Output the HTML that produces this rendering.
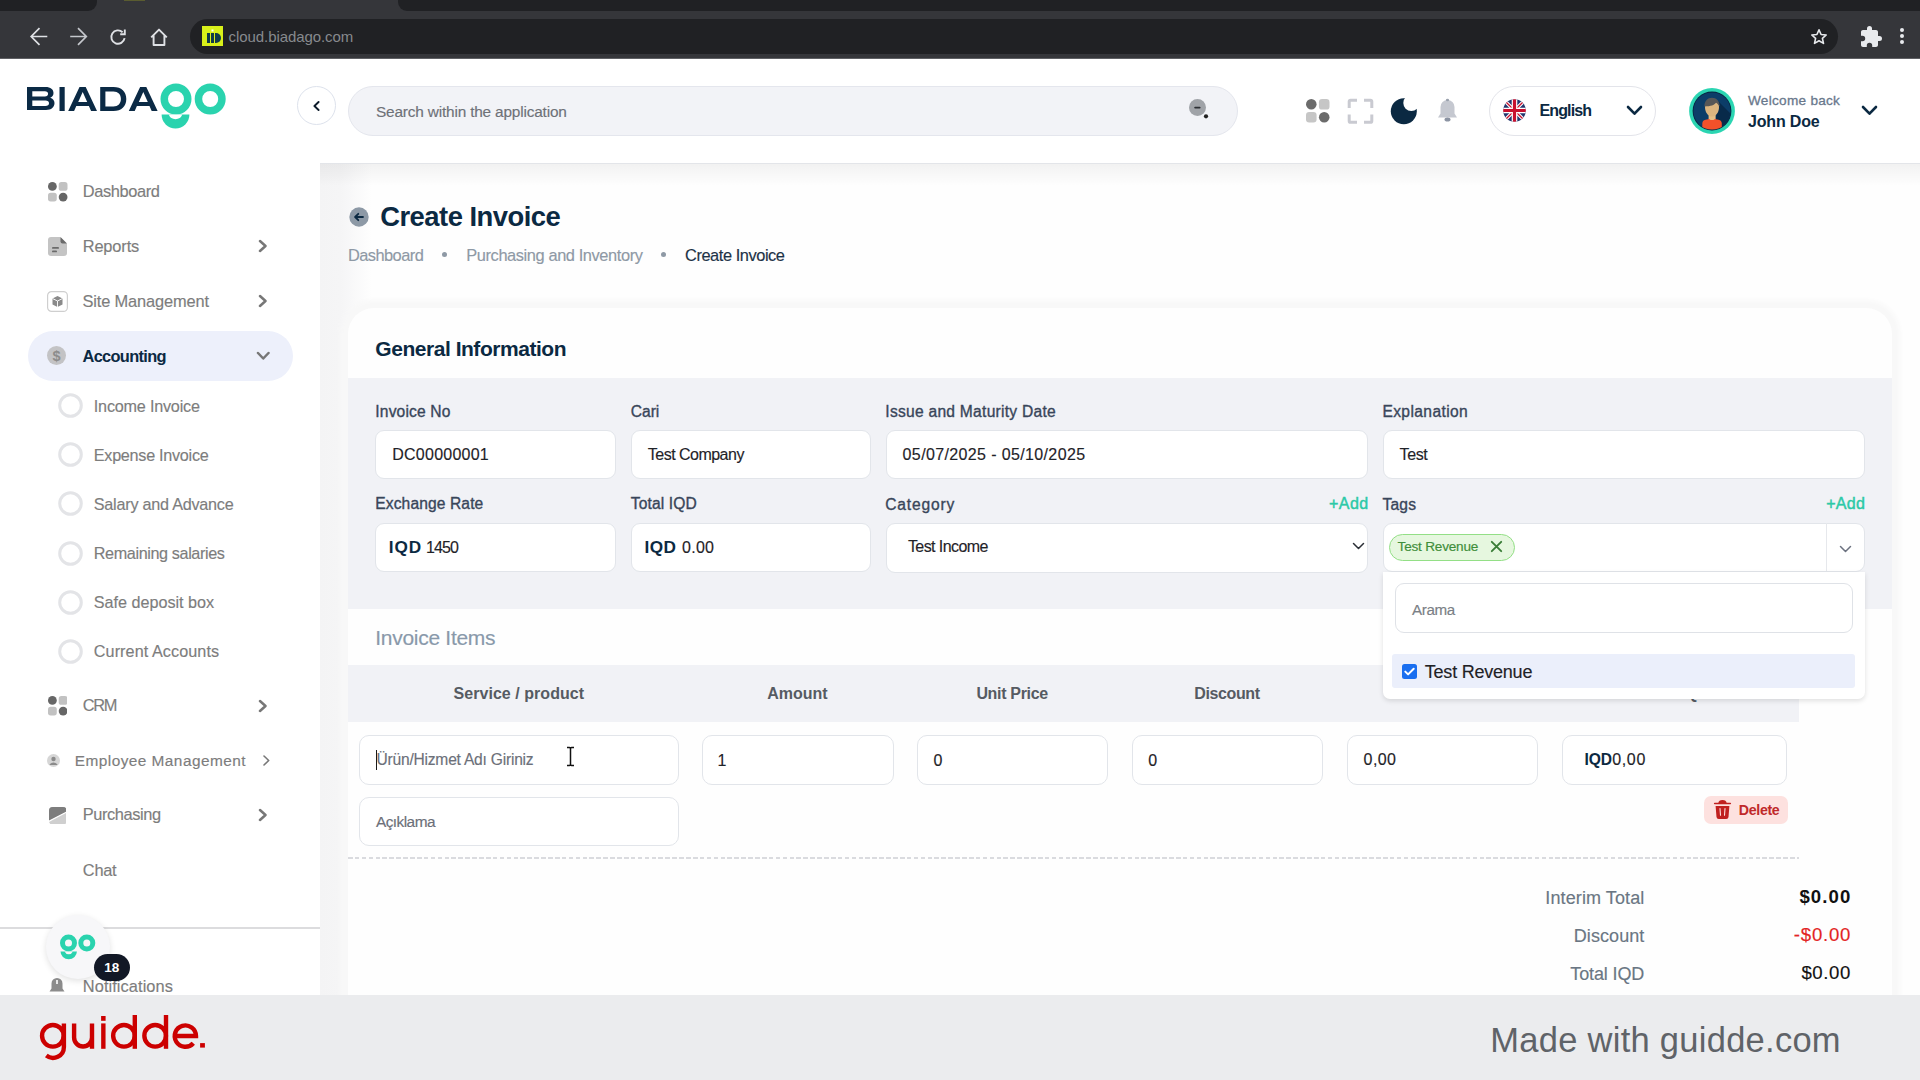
<!DOCTYPE html>
<html><head><meta charset="utf-8"><style>
html,body{margin:0;padding:0;width:1920px;height:1080px;overflow:hidden;background:#fff}
body{position:relative;font-family:'Liberation Sans', sans-serif}
.t{position:absolute;line-height:1;white-space:nowrap}
.m{-webkit-text-stroke-width:0.15px}
.r{position:absolute;box-sizing:border-box}
</style></head><body>
<div class="r" style="left:0px;top:0px;width:1920px;height:58px;background:#35363a"></div>
<div class="r" style="left:0px;top:0px;width:97px;height:11px;background:#202124;border-bottom-right-radius:9px"></div>
<div class="r" style="left:398px;top:0px;width:1522px;height:11px;background:#202124;border-bottom-left-radius:9px"></div>
<div class="r" style="left:124px;top:0px;width:21px;height:1px;background:#5a5c30"></div>
<div class="r" style="left:0px;top:58px;width:1920px;height:1px;background:#5f6064"></div>
<div class="r" style="left:190px;top:19px;width:1648px;height:35px;background:#202124;border-radius:18px"></div>
<svg class="r" style="left:28px;top:26px;" width="22" height="22" viewBox="0 0 22 22"><path d="M19.3 10.5H4M11.5 2.2L3.2 10.5l8.3 8.3" fill="none" stroke="#dfe1e5" stroke-width="1.7"/></svg>
<svg class="r" style="left:68px;top:26px;" width="22" height="22" viewBox="0 0 22 22"><path d="M2.2 10.5H17.5M10 2.2l8.3 8.3-8.3 8.3" fill="none" stroke="#c4c7cc" stroke-width="1.7"/></svg>
<svg class="r" style="left:107px;top:26px;" width="22" height="22" viewBox="0 0 22 22"><path d="M17.6 12.2A6.7 6.7 0 1 1 15.6 6.2" fill="none" stroke="#dfe1e5" stroke-width="1.9"/><path d="M17.8 3.6v4.6h-4.6" fill="none" stroke="#dfe1e5" stroke-width="1.9"/></svg>
<svg class="r" style="left:148px;top:26px;" width="22" height="22" viewBox="0 0 22 22"><path d="M3.2 11.4L11 3.6l7.8 7.8M5.6 9.4v9.6h10.8V9.4" fill="none" stroke="#dfe1e5" stroke-width="1.9" stroke-linejoin="round"/></svg>
<div class="r" style="left:202px;top:26px;width:21px;height:20px;background:#d8f01a"></div>
<svg class="r" style="left:202px;top:26px;" width="21" height="20" viewBox="0 0 21 20"><rect x="5" y="7" width="3" height="10" fill="#0e3a4a"/><rect x="9" y="7" width="3" height="10" fill="#0e3a4a"/><path d="M13 7h1a5 5 0 0 1 0 10h-1z" fill="#0e3a4a"/><rect x="9.5" y="3.5" width="2" height="2" fill="#fff"/></svg>
<div class="t" style="left:228.60px;top:28.85px;font-size:15px;color:#878a8e;letter-spacing:-0.077px;-webkit-text-stroke-width:0;">cloud.biadago.com</div>
<svg class="r" style="left:1810px;top:28px;" width="18" height="18" viewBox="0 0 18 18"><path d="M9 1.8l2.1 4.7 5.1.5-3.8 3.4 1.1 5-4.5-2.6-4.5 2.6 1.1-5L1.8 7l5.1-.5z" fill="none" stroke="#e8eaed" stroke-width="1.6" stroke-linejoin="round"/></svg>
<svg class="r" style="left:1859px;top:25px;" width="24" height="24" viewBox="0 0 24 24"><path d="M20.5 11H19V7c0-1.1-.9-2-2-2h-4V3.5a2.5 2.5 0 0 0-5 0V5H4c-1.1 0-2 .9-2 2v3.8h1.5a2.7 2.7 0 0 1 0 5.4H2V20c0 1.1.9 2 2 2h3.8v-1.5a2.7 2.7 0 0 1 5.4 0V22H17c1.1 0 2-.9 2-2v-4h1.5a2.5 2.5 0 0 0 0-5z" fill="#e8eaed"/></svg>
<div class="r" style="left:1900px;top:28px;width:4px;height:4px;background:#e8eaed;border-radius:50%"></div>
<div class="r" style="left:1900px;top:34px;width:4px;height:4px;background:#e8eaed;border-radius:50%"></div>
<div class="r" style="left:1900px;top:40px;width:4px;height:4px;background:#e8eaed;border-radius:50%"></div>
<div class="r" style="left:0px;top:59px;width:320px;height:936px;background:#ffffff"></div>
<div class="r" style="left:320px;top:59px;width:1600px;height:936px;background:#fefefe"></div>
<div class="r" style="left:320px;top:163px;width:52px;height:832px;background:linear-gradient(90deg,#f4f4f5 0,#f5f5f6 40%,rgba(254,254,254,0) 100%)"></div>
<div class="r" style="left:320px;top:163px;width:1600px;height:23px;background:linear-gradient(180deg,rgba(0,0,0,0.05),rgba(0,0,0,0))"></div>
<div class="r" style="left:320px;top:59px;width:1600px;height:105px;background:#ffffff;border-bottom:1px solid #e3e5e9"></div>
<svg class="r" style="left:20px;top:80px;" width="220" height="55" viewBox="0 0 220 55">
<g fill="#0b2a45">
<path d="M7 7h18.5c5.2 0 8 2.4 8 6 0 2.4-1.3 4-3.3 4.8 2.6.7 4.3 2.6 4.3 5.3 0 4.2-3.1 7-8.5 7H7z M12.3 11.3v5.1h12.6c2 0 3.2-.9 3.2-2.55 0-1.65-1.2-2.55-3.2-2.55z M12.3 20.4v5.6h13.2c2.2 0 3.5-1 3.5-2.8s-1.3-2.8-3.5-2.8z"/>
<rect x="39.5" y="7" width="5.2" height="24"/>
<path d="M59.5 7h6.2l11.3 24h-5.9l-2.2-4.9H56.3L54.1 31h-5.9z M58.2 22h9l-4.5-10z"/>
<path d="M80.2 7h13.3c7.9 0 12.8 4.6 12.8 12s-4.9 12-12.8 12H80.2z M85.4 11.6v14.8h8c4.7 0 7.5-2.9 7.5-7.4s-2.8-7.4-7.5-7.4z"/>
<path d="M120.1 7h6.2l11.3 24h-5.9l-2.2-4.9h-12.6L114.7 31h-5.9z M118.8 22h9l-4.5-10z"/>
</g>
<g fill="#2ad3ae" fill-rule="evenodd">
<path d="M140.5 19a15.5 15.5 0 1 0 31 0a15.5 15.5 0 1 0 -31 0z M148 19a8 8 0 1 0 16 0a8 8 0 1 0 -16 0z"/>
<path d="M174.7 19a15.5 15.5 0 1 0 31 0a15.5 15.5 0 1 0 -31 0z M182.2 19a8 8 0 1 0 16 0a8 8 0 1 0 -16 0z"/>
<path d="M141.6 34.6h27.8a13.9 13.9 0 0 1 -27.8 0z"/>
</g>
<path d="M148.65 34.6A7.4 7.4 0 0 0 162.35 34.6z" fill="#fff"/>
</svg>
<svg class="r" style="left:48px;top:182px;" width="19.5" height="19.5" viewBox="0 0 19.5 19.5"><circle cx="4.3875" cy="4.3875" r="4.3875" fill="#666"/><rect x="10.725" y="0" width="8.775" height="8.775" rx="2.6325" fill="#c2c2c2"/><rect x="0" y="10.725" width="8.775" height="8.775" rx="2.6325" fill="#c2c2c2"/><circle cx="15.1125" cy="15.1125" r="4.3875" fill="#666"/></svg>
<div class="t m" style="left:82.70px;top:183.36px;font-size:16.4px;color:#7d7d7d;letter-spacing:-0.367px;">Dashboard</div>
<svg class="r" style="left:48px;top:237px;" width="19" height="19" viewBox="0 0 19 19"><path d="M3 0h9l7 7v9a3 3 0 0 1 -3 3H3a3 3 0 0 1 -3 -3V3a3 3 0 0 1 3 -3z" fill="#c4c4c4"/><path d="M12.5 0L19 6.5h-4.5a2 2 0 0 1 -2 -2z" fill="#6a6a6a"/><rect x="4" y="10" width="7" height="1.8" rx=".9" fill="#6a6a6a"/><rect x="4" y="13.5" width="5" height="1.8" rx=".9" fill="#6a6a6a"/></svg>
<div class="t m" style="left:82.70px;top:238.36px;font-size:16.4px;color:#7d7d7d;letter-spacing:-0.140px;">Reports</div>
<svg class="r" style="left:257.6px;top:239.0px;" width="9.8" height="14" viewBox="0 0 9.8 14"><path d="M2 2L7.5 7.0L2 12" fill="none" stroke="#777" stroke-width="2.5" stroke-linecap="round" stroke-linejoin="round"/></svg>
<svg class="r" style="left:47px;top:291px;" width="21" height="21" viewBox="0 0 21 21"><rect x=".6" y=".6" width="19.8" height="19.8" rx="4" fill="none" stroke="#cfcfcf" stroke-width="1.2"/><path d="M10.5 5l5 2.5v6L10.5 16 5.5 13.5v-6z" fill="#8a8a8a"/><path d="M5.5 7.5l5 2.5 5-2.5M10.5 10v6" fill="none" stroke="#fff" stroke-width=".9"/></svg>
<div class="t m" style="left:82.50px;top:292.86px;font-size:16.4px;color:#7d7d7d;letter-spacing:-0.145px;">Site Management</div>
<svg class="r" style="left:257.6px;top:294.0px;" width="9.8" height="14" viewBox="0 0 9.8 14"><path d="M2 2L7.5 7.0L2 12" fill="none" stroke="#777" stroke-width="2.5" stroke-linecap="round" stroke-linejoin="round"/></svg>
<div class="r" style="left:28px;top:331px;width:265px;height:50px;background:#edf0fb;border-radius:25px"></div>
<svg class="r" style="left:47px;top:346px;" width="19" height="19" viewBox="0 0 19 19"><circle cx="9.5" cy="9.5" r="9.5" fill="#c3c3c5"/><text x="9.5" y="14.5" text-anchor="middle" font-family="Liberation Sans" font-weight="700" font-size="14.5" fill="#8c8c8c">$</text></svg>
<div class="t" style="left:82.50px;top:347.56px;font-size:16.4px;color:#0b2942;font-weight:700;letter-spacing:-0.678px;">Accounting</div>
<svg class="r" style="left:255.55px;top:350.90000000000003px;" width="14.5" height="9.8" viewBox="0 0 14.5 9.8"><path d="M2 2L7.25 7.5L12.5 2" fill="none" stroke="#777" stroke-width="2.5" stroke-linecap="round" stroke-linejoin="round"/></svg>
<svg class="r" style="left:58px;top:392.8px;" width="25" height="25" viewBox="0 0 25 25"><circle cx="12.5" cy="12.5" r="10.8" fill="none" stroke="#e3e4e7" stroke-width="3"/></svg>
<div class="t m" style="left:93.80px;top:397.53px;font-size:16.2px;color:#7d7d7d;letter-spacing:-0.211px;">Income Invoice</div>
<svg class="r" style="left:58px;top:442.1px;" width="25" height="25" viewBox="0 0 25 25"><circle cx="12.5" cy="12.5" r="10.8" fill="none" stroke="#e3e4e7" stroke-width="3"/></svg>
<div class="t m" style="left:93.80px;top:446.53px;font-size:16.2px;color:#7d7d7d;letter-spacing:-0.276px;">Expense Invoice</div>
<svg class="r" style="left:58px;top:491.4px;" width="25" height="25" viewBox="0 0 25 25"><circle cx="12.5" cy="12.5" r="10.8" fill="none" stroke="#e3e4e7" stroke-width="3"/></svg>
<div class="t m" style="left:93.80px;top:496.23px;font-size:16.2px;color:#7d7d7d;letter-spacing:-0.241px;">Salary and Advance</div>
<svg class="r" style="left:58px;top:540.7px;" width="25" height="25" viewBox="0 0 25 25"><circle cx="12.5" cy="12.5" r="10.8" fill="none" stroke="#e3e4e7" stroke-width="3"/></svg>
<div class="t m" style="left:93.80px;top:545.13px;font-size:16.2px;color:#7d7d7d;letter-spacing:-0.387px;">Remaining salaries</div>
<svg class="r" style="left:58px;top:590.0px;" width="25" height="25" viewBox="0 0 25 25"><circle cx="12.5" cy="12.5" r="10.8" fill="none" stroke="#e3e4e7" stroke-width="3"/></svg>
<div class="t m" style="left:93.80px;top:594.23px;font-size:16.2px;color:#7d7d7d;letter-spacing:-0.019px;">Safe deposit box</div>
<svg class="r" style="left:58px;top:639.3px;" width="25" height="25" viewBox="0 0 25 25"><circle cx="12.5" cy="12.5" r="10.8" fill="none" stroke="#e3e4e7" stroke-width="3"/></svg>
<div class="t m" style="left:93.80px;top:643.33px;font-size:16.2px;color:#7d7d7d;letter-spacing:0.076px;">Current Accounts</div>
<svg class="r" style="left:47.5px;top:696px;" width="19.5" height="19.5" viewBox="0 0 19.5 19.5"><circle cx="4.3875" cy="4.3875" r="4.3875" fill="#666"/><rect x="10.725" y="0" width="8.775" height="8.775" rx="2.6325" fill="#c2c2c2"/><rect x="0" y="10.725" width="8.775" height="8.775" rx="2.6325" fill="#c2c2c2"/><circle cx="15.1125" cy="15.1125" r="4.3875" fill="#666"/></svg>
<div class="t m" style="left:82.65px;top:697.46px;font-size:16.4px;color:#7d7d7d;letter-spacing:-1.325px;">CRM</div>
<svg class="r" style="left:257.6px;top:698.5px;" width="9.8" height="14" viewBox="0 0 9.8 14"><path d="M2 2L7.5 7.0L2 12" fill="none" stroke="#777" stroke-width="2.5" stroke-linecap="round" stroke-linejoin="round"/></svg>
<svg class="r" style="left:47px;top:754px;" width="13" height="13" viewBox="0 0 13 13"><circle cx="6.5" cy="6.5" r="6.5" fill="#d6d6d6"/><circle cx="6.5" cy="5" r="2.2" fill="#8a8a8a"/><path d="M2.3 11a4.5 4 0 0 1 8.4 0z" fill="#8a8a8a"/></svg>
<div class="t m" style="left:74.80px;top:752.81px;font-size:15.4px;color:#7d7d7d;letter-spacing:0.452px;">Employee Management</div>
<svg class="r" style="left:262.1px;top:753.9px;" width="9" height="13" viewBox="0 0 9 13"><path d="M2 2L6.7 6.5L2 11" fill="none" stroke="#777" stroke-width="1.6" stroke-linecap="round" stroke-linejoin="round"/></svg>
<svg class="r" style="left:48.5px;top:806.5px;" width="17.5" height="17.5" viewBox="0 0 17.5 17.5"><rect x="0" y="0" width="17.5" height="17.5" rx="3.5" fill="#cfcfcf"/><path d="M3.5 0h10.5a3.5 3.5 0 0 1 3.5 3.5v1.5L0 14V3.5A3.5 3.5 0 0 1 3.5 0z" fill="#7d7d7d"/><path d="M-1 14.8L18.5 4.6" stroke="#fff" stroke-width="1.2"/></svg>
<div class="t m" style="left:82.65px;top:806.26px;font-size:16.4px;color:#7d7d7d;letter-spacing:-0.393px;">Purchasing</div>
<svg class="r" style="left:257.6px;top:808.2px;" width="9.8" height="14" viewBox="0 0 9.8 14"><path d="M2 2L7.5 7.0L2 12" fill="none" stroke="#777" stroke-width="2.5" stroke-linecap="round" stroke-linejoin="round"/></svg>
<div class="t m" style="left:82.80px;top:861.86px;font-size:16.4px;color:#7d7d7d;letter-spacing:-0.248px;">Chat</div>
<div class="r" style="left:0px;top:927px;width:320px;height:2px;background:#dcdcde"></div>
<svg class="r" style="left:49px;top:977px;" width="16" height="18" viewBox="0 0 16 18"><path d="M8 1a5.5 5.5 0 0 1 5.5 5.5v5l2 3H.5l2-3v-5A5.5 5.5 0 0 1 8 1z" fill="#8c8c8c"/><rect x="7.2" y="3" width="1.6" height="4" fill="#fff"/></svg>
<div class="t m" style="left:82.80px;top:977.96px;font-size:16.4px;color:#7d7d7d;letter-spacing:0.072px;">Notifications</div>
<div class="r" style="left:46px;top:915px;width:64px;height:64px;background:#f7f7f9;border-radius:50%;box-shadow:0 2px 6px rgba(0,0,0,0.12)"></div>
<svg class="r" style="left:55px;top:930px;" width="45" height="35" viewBox="0 0 45 35"><g fill="#2ad3ae" fill-rule="evenodd">
<path d="M5 13a8.5 8.5 0 1 0 17 0a8.5 8.5 0 1 0 -17 0z M10 13a3.5 3.5 0 1 0 7 0a3.5 3.5 0 1 0 -7 0z"/>
<path d="M23.3 13a8.5 8.5 0 1 0 17 0a8.5 8.5 0 1 0 -17 0z M28.3 13a3.5 3.5 0 1 0 7 0a3.5 3.5 0 1 0 -7 0z"/>
<path d="M5.5 21.6h16.4a8.2 7.6 0 0 1 -16.4 0z"/></g>
<path d="M9.5 21.6A4.6 4.6 0 0 0 17.9 21.6z" fill="#f7f7f9"/></svg>
<div class="r" style="left:94px;top:954px;width:36px;height:27px;background:#121826;border-radius:14px"></div>
<div class="t" style="left:-188.20px;width:600px;text-align:center;top:960.73px;font-size:13.5px;color:#fff;font-weight:700;">18</div>
<div class="r" style="left:297px;top:86px;width:39px;height:39px;background:#fff;border:1px solid #dde2ec;border-radius:50%"></div>
<svg class="r" style="left:311px;top:100px;" width="10" height="12" viewBox="0 0 10 12"><path d="M7.6 2L3.4 6 7.6 10" fill="none" stroke="#0d1b2a" stroke-width="1.9" stroke-linecap="round" stroke-linejoin="round"/></svg>
<div class="r" style="left:348px;top:86px;width:890px;height:50px;background:#f2f3f7;border:1px solid #e4e6ed;border-radius:25px"></div>
<div class="t m" style="left:376.00px;top:103.61px;font-size:15.4px;color:#6e7177;letter-spacing:-0.180px;">Search within the application</div>
<svg class="r" style="left:1187px;top:97px;" width="22" height="22" viewBox="0 0 22 22"><circle cx="10.5" cy="10.5" r="8.5" fill="#a0a3a8"/><rect x="7.2" y="9.7" width="6.4" height="1.8" rx=".9" fill="#2b2e33"/><circle cx="19" cy="19.3" r="2.1" fill="#222"/></svg>
<svg class="r" style="left:1306px;top:99px;" width="23.5" height="23.5" viewBox="0 0 23.5 23.5"><circle cx="5.2875000000000005" cy="5.2875000000000005" r="5.2875000000000005" fill="#6b6b6b"/><rect x="12.924999999999999" y="0" width="10.575000000000001" height="10.575000000000001" rx="3.1725000000000003" fill="#c6c6c6"/><rect x="0" y="12.924999999999999" width="10.575000000000001" height="10.575000000000001" rx="3.1725000000000003" fill="#c6c6c6"/><circle cx="18.2125" cy="18.2125" r="5.2875000000000005" fill="#6b6b6b"/></svg>
<svg class="r" style="left:1347px;top:98px;" width="27" height="26" viewBox="0 0 27 26"><path d="M2.2 10V3.6c0-.8.6-1.4 1.4-1.4H10M17 2.2h6.4c.8 0 1.4.6 1.4 1.4V10M24.8 16.5v6.4c0 .8-.6 1.4-1.4 1.4H17M10 24.3H3.6c-.8 0-1.4-.6-1.4-1.4v-6.4" fill="none" stroke="#c9cad1" stroke-width="3"/></svg>
<svg class="r" style="left:1389px;top:96px;" width="30" height="30" viewBox="0 0 30 30"><defs><mask id="mm"><rect width="30" height="30" fill="#fff"/><circle cx="22.3" cy="7" r="8" fill="#000"/></mask></defs><circle cx="14.8" cy="15.2" r="13" fill="#0b2942" mask="url(#mm)"/></svg>
<svg class="r" style="left:1437px;top:98px;" width="21" height="26" viewBox="0 0 21 26"><path d="M10.5 2a7 7 0 0 1 7 7v6.5l2.5 4H1l2.5-4V9a7 7 0 0 1 7-7z" fill="#c5c8d0"/><ellipse cx="10.5" cy="21.5" rx="3" ry="2" fill="#8c94a3"/><ellipse cx="10.5" cy="2" rx="1.6" ry="1.2" fill="#9aa1ad"/></svg>
<div class="r" style="left:1489px;top:86px;width:167px;height:50px;background:#fff;border:1px solid #e3e4ea;border-radius:25px"></div>
<svg class="r" style="left:1503px;top:99px;" width="23" height="23" viewBox="0 0 23 23"><defs><clipPath id="fc"><circle cx="11.5" cy="11.5" r="11.3"/></clipPath></defs>
<g clip-path="url(#fc)"><rect width="23" height="23" fill="#23366e"/>
<path d="M0 0L23 23M23 0L0 23" stroke="#fff" stroke-width="3.4"/>
<path d="M0 0L23 23M23 0L0 23" stroke="#c8102e" stroke-width="1.3"/>
<path d="M11.5 0V23M0 11.5H23" stroke="#fff" stroke-width="5.6"/>
<path d="M11.5 0V23M0 11.5H23" stroke="#c8102e" stroke-width="3.2"/></g></svg>
<div class="t" style="left:1539.50px;top:102.70px;font-size:16px;color:#0b2942;font-weight:700;letter-spacing:-0.883px;">English</div>
<svg class="r" style="left:1626.2px;top:105.3px;" width="17" height="11" viewBox="0 0 17 11"><path d="M2 2L8.5 8.7L15 2" fill="none" stroke="#0b2942" stroke-width="2.6" stroke-linecap="round" stroke-linejoin="round"/></svg>
<svg class="r" style="left:1687.5px;top:86.7px;" width="48" height="48" viewBox="0 0 48 48"><defs><clipPath id="av"><circle cx="24" cy="24" r="18.6"/></clipPath></defs>
<circle cx="24" cy="24" r="22.9" fill="#2bd5b2"/><circle cx="24" cy="24" r="19.4" fill="#06233f"/><circle cx="24" cy="24" r="18.6" fill="#0c3d68"/>
<g clip-path="url(#av)"><path d="M30 14L48 32V48H26z" fill="#082a4a"/>
<rect x="20.6" y="27" width="7" height="7" fill="#e6bf86"/>
<path d="M14.3 48V36.6a4 4 0 0 1 3.2-3.9l3.6-.8q2.9 2.4 5.9 0l3.6.8a4 4 0 0 1 3.2 3.9V48z" fill="#f2512a"/>
<path d="M17 20c0-4.5 3-7.5 7-7.5s7 3 7 7.5c0 5.5-3.2 9.6-7 9.6s-7-4.1-7-9.6z" fill="#dcb57f"/>
<path d="M16.4 19.5c0-5.6 3.3-8.7 7.6-8.7s7.7 3.1 7.7 8.7c-1.3-1.8-2.5-3-3.7-3.7-1.8 2.4-5 3.6-11.6 3.7z" fill="#575757"/></g></svg>
<div class="t" style="left:1748.00px;top:94.24px;font-size:13.6px;color:#69788c;letter-spacing:0.275px;-webkit-text-stroke:0.3px #69788c;">Welcome back</div>
<div class="t" style="left:1748.00px;top:114.00px;font-size:16px;color:#0b2942;font-weight:700;letter-spacing:-0.169px;">John Doe</div>
<svg class="r" style="left:1860.9px;top:105.3px;" width="17" height="11" viewBox="0 0 17 11"><path d="M2 2L8.5 8.7L15 2" fill="none" stroke="#0b2942" stroke-width="2.6" stroke-linecap="round" stroke-linejoin="round"/></svg>
<svg class="r" style="left:349px;top:207px;" width="20" height="20" viewBox="0 0 20 20"><circle cx="10" cy="10" r="9.7" fill="#8d99a6"/><path d="M14 10H6.3M9.3 6.8L6.1 10l3.2 3.2" fill="none" stroke="#0b2942" stroke-width="1.8" stroke-linecap="round" stroke-linejoin="round"/></svg>
<div class="t" style="left:380.20px;top:203.31px;font-size:27.4px;color:#0b2942;font-weight:700;letter-spacing:-0.511px;">Create Invoice</div>
<div class="t m" style="left:347.90px;top:246.96px;font-size:16.4px;color:#8e99a5;letter-spacing:-0.530px;">Dashboard</div>
<div class="r" style="left:442px;top:252px;width:5px;height:5px;background:#8e99a5;border-radius:50%"></div>
<div class="t m" style="left:466.30px;top:246.96px;font-size:16.4px;color:#8e99a5;letter-spacing:-0.403px;">Purchasing and Inventory</div>
<div class="r" style="left:661px;top:252px;width:5px;height:5px;background:#8e99a5;border-radius:50%"></div>
<div class="t m" style="left:685.00px;top:246.96px;font-size:16.4px;color:#1d3247;letter-spacing:-0.441px;">Create Invoice</div>
<div class="r" style="left:348px;top:308px;width:1544px;height:692px;background:#fefefe;border-radius:26px 26px 0 0;box-shadow:0 0 5px 8px #f8f8f8"></div>
<div class="t" style="left:375.30px;top:337.75px;font-size:21px;color:#0b2942;font-weight:700;letter-spacing:-0.464px;">General Information</div>
<div class="r" style="left:348px;top:378px;width:1544px;height:231px;background:#f1f2f6"></div>
<div class="t" style="left:375.30px;top:403.64px;font-size:15.6px;color:#39465a;letter-spacing:0.166px;-webkit-text-stroke:0.35px #39465a;">Invoice No</div>
<div class="r" style="left:375px;top:430px;width:241px;height:49px;background:#fff;border:1px solid #e2e5ea;border-radius:9px"></div>
<div class="t m" style="left:392.30px;top:446.70px;font-size:16px;color:#1f2328;letter-spacing:0.231px;">DC00000001</div>
<div class="t" style="left:630.70px;top:403.64px;font-size:15.6px;color:#39465a;letter-spacing:0.004px;-webkit-text-stroke:0.35px #39465a;">Cari</div>
<div class="r" style="left:631px;top:430px;width:240px;height:49px;background:#fff;border:1px solid #e2e5ea;border-radius:9px"></div>
<div class="t m" style="left:647.80px;top:446.80px;font-size:16px;color:#1f2328;letter-spacing:-0.516px;">Test Company</div>
<div class="t" style="left:885.30px;top:403.84px;font-size:15.6px;color:#39465a;letter-spacing:0.262px;-webkit-text-stroke:0.35px #39465a;">Issue and Maturity Date</div>
<div class="r" style="left:886px;top:430px;width:482px;height:49px;background:#fff;border:1px solid #e2e5ea;border-radius:9px"></div>
<div class="t m" style="left:902.60px;top:446.80px;font-size:16px;color:#1f2328;letter-spacing:0.368px;">05/07/2025 - 05/10/2025</div>
<div class="t" style="left:1382.40px;top:404.04px;font-size:15.6px;color:#39465a;letter-spacing:0.385px;-webkit-text-stroke:0.35px #39465a;">Explanation</div>
<div class="r" style="left:1383px;top:430px;width:482px;height:49px;background:#fff;border:1px solid #e2e5ea;border-radius:9px"></div>
<div class="t m" style="left:1399.60px;top:446.90px;font-size:16px;color:#1f2328;letter-spacing:-0.387px;">Test</div>
<div class="t" style="left:375.30px;top:496.34px;font-size:15.6px;color:#39465a;letter-spacing:0.111px;-webkit-text-stroke:0.35px #39465a;">Exchange Rate</div>
<div class="r" style="left:375px;top:523px;width:241px;height:49px;background:#fff;border:1px solid #e2e5ea;border-radius:9px"></div>
<div class="t" style="left:388.70px;top:538.68px;font-size:17.2px;color:#0b2942;font-weight:700;letter-spacing:0.964px;">IQD</div>
<div class="t m" style="left:425.90px;top:539.70px;font-size:16px;color:#1f2328;letter-spacing:-0.867px;">1450</div>
<div class="t" style="left:630.70px;top:496.34px;font-size:15.6px;color:#39465a;letter-spacing:0.148px;-webkit-text-stroke:0.35px #39465a;">Total IQD</div>
<div class="r" style="left:631px;top:523px;width:240px;height:49px;background:#fff;border:1px solid #e2e5ea;border-radius:9px"></div>
<div class="t" style="left:644.60px;top:538.68px;font-size:17.2px;color:#0b2942;font-weight:700;letter-spacing:0.364px;">IQD</div>
<div class="t m" style="left:682.00px;top:539.70px;font-size:16px;color:#1f2328;letter-spacing:0.280px;">0.00</div>
<div class="t" style="left:885.30px;top:496.74px;font-size:15.6px;color:#39465a;letter-spacing:0.815px;-webkit-text-stroke:0.35px #39465a;">Category</div>
<div class="t" style="right:551.29px;top:496.40px;font-size:16px;color:#2cc9a7;letter-spacing:0.500px;-webkit-text-stroke:0.45px #2cc9a7;">+Add</div>
<div class="r" style="left:886px;top:523px;width:482px;height:50px;background:#fff;border:1px solid #e2e5ea;border-radius:9px"></div>
<div class="t m" style="left:907.90px;top:538.90px;font-size:16px;color:#1f2328;letter-spacing:-0.578px;">Test Income</div>
<svg class="r" style="left:1352px;top:542px;" width="13" height="9" viewBox="0 0 13 9"><path d="M1.5 1.5L6.5 6.5 11.5 1.5" fill="none" stroke="#2b2f36" stroke-width="1.5" stroke-linecap="round" stroke-linejoin="round"/></svg>
<div class="t" style="left:1382.40px;top:496.74px;font-size:15.6px;color:#39465a;letter-spacing:0.215px;-webkit-text-stroke:0.35px #39465a;">Tags</div>
<div class="t" style="right:54.92px;top:496.40px;font-size:16px;color:#2cc9a7;letter-spacing:0.267px;-webkit-text-stroke:0.45px #2cc9a7;">+Add</div>
<div class="r" style="left:1383px;top:522.5px;width:482px;height:49.0px;background:#fff;border:1px solid #e2e5ea;border-radius:9px"></div>
<div class="r" style="left:1826px;top:523px;width:1px;height:48px;background:#e6e8ec"></div>
<svg class="r" style="left:1839px;top:545px;" width="13" height="9" viewBox="0 0 13 9"><path d="M1.5 1.5L6.5 6.5 11.5 1.5" fill="none" stroke="#6c7280" stroke-width="1.5" stroke-linecap="round" stroke-linejoin="round"/></svg>
<div class="r" style="left:1388.5px;top:533.5px;width:126.5px;height:27.5px;background:#e6f7df;border:1.3px solid #93df86;border-radius:14px"></div>
<div class="t m" style="left:1397.60px;top:539.94px;font-size:13.6px;color:#3f8e3b;letter-spacing:-0.215px;">Test Revenue</div>
<svg class="r" style="left:1490px;top:540px;" width="13" height="13" viewBox="0 0 13 13"><path d="M1.8 1.8L11.2 11.2M11.2 1.8L1.8 11.2" stroke="#3a7d37" stroke-width="1.9" stroke-linecap="round"/></svg>
<div class="t m" style="left:375.30px;top:626.75px;font-size:21px;color:#8999aa;letter-spacing:-0.287px;">Invoice Items</div>
<div class="r" style="left:348px;top:665px;width:1451px;height:57px;background:#f1f2f6"></div>
<div class="t" style="left:218.82px;width:600px;text-align:center;top:685.70px;font-size:16px;color:#565b62;font-weight:700;letter-spacing:0.041px;">Service / product</div>
<div class="t" style="left:497.38px;width:600px;text-align:center;top:685.90px;font-size:16px;color:#565b62;font-weight:700;letter-spacing:-0.048px;">Amount</div>
<div class="t" style="left:712.14px;width:600px;text-align:center;top:685.90px;font-size:16px;color:#565b62;font-weight:700;letter-spacing:-0.320px;">Unit Price</div>
<div class="t" style="left:927.00px;width:600px;text-align:center;top:685.90px;font-size:16px;color:#565b62;font-weight:700;letter-spacing:-0.391px;">Discount</div>
<div class="t" style="left:1142.62px;width:600px;text-align:center;top:685.90px;font-size:16px;color:#565b62;font-weight:700;letter-spacing:0.240px;">Total</div>
<div class="t" style="left:1374.13px;width:600px;text-align:center;top:685.90px;font-size:16px;color:#565b62;font-weight:700;letter-spacing:0.260px;">Total IQD</div>
<div class="r" style="left:359px;top:734.5px;width:320px;height:50.0px;background:#fff;border:1px solid #e2e5ea;border-radius:10px"></div>
<div class="t m" style="left:376.50px;top:752.34px;font-size:15.6px;color:#6c7079;letter-spacing:-0.224px;">Ürün/Hizmet Adı Giriniz</div>
<div class="r" style="left:375.6px;top:749.5px;width:1.3999999999999773px;height:20.0px;background:#1a1a1a"></div>
<svg class="r" style="left:565px;top:746px;" width="11" height="21" viewBox="0 0 11 21"><path d="M2 1.5h2.5q1 0 1 1.2q0-1.2 1-1.2H9M5.5 2.7v15.6M2 19.5h2.5q1 0 1-1.2q0 1.2 1 1.2H9" fill="none" stroke="#111" stroke-width="1.5"/></svg>
<div class="r" style="left:702px;top:734.5px;width:192px;height:50.0px;background:#fff;border:1px solid #e2e5ea;border-radius:10px"></div>
<div class="t m" style="left:717.60px;top:752.60px;font-size:16px;color:#1f2328;">1</div>
<div class="r" style="left:917px;top:734.5px;width:191px;height:50.0px;background:#fff;border:1px solid #e2e5ea;border-radius:10px"></div>
<div class="t m" style="left:933.40px;top:752.60px;font-size:16px;color:#1f2328;">0</div>
<div class="r" style="left:1132px;top:734.5px;width:191px;height:50.0px;background:#fff;border:1px solid #e2e5ea;border-radius:10px"></div>
<div class="t m" style="left:1148.20px;top:752.60px;font-size:16px;color:#1f2328;">0</div>
<div class="r" style="left:1347px;top:734.5px;width:191px;height:50.0px;background:#fff;border:1px solid #e2e5ea;border-radius:10px"></div>
<div class="t m" style="left:1363.60px;top:751.60px;font-size:16px;color:#1f2328;letter-spacing:0.413px;">0,00</div>
<div class="r" style="left:1562px;top:734.5px;width:225px;height:50.0px;background:#fff;border:1px solid #e2e5ea;border-radius:10px"></div>
<div class="t" style="left:1584.50px;top:751.94px;font-size:15.6px;color:#0b2942;font-weight:700;letter-spacing:-0.114px;">IQD</div>
<div class="t m" style="left:1612.30px;top:751.60px;font-size:16px;color:#1f2328;letter-spacing:0.613px;">0,00</div>
<div class="r" style="left:359px;top:796.5px;width:320px;height:49.5px;background:#fff;border:1px solid #e2e5ea;border-radius:10px"></div>
<div class="t m" style="left:376.00px;top:813.71px;font-size:15.4px;color:#6c7079;letter-spacing:-0.547px;">Açıklama</div>
<div class="r" style="left:1704px;top:795.5px;width:84px;height:28.5px;background:#fde1df;border-radius:7px"></div>
<svg class="r" style="left:1713px;top:799px;" width="19" height="21" viewBox="0 0 19 21"><path d="M5.3 4.2C5.6 1.8 7 .9 9.5 .9s3.9.9 4.2 3.3z" fill="#c0201f"/><rect x=".9" y="3.7" width="17.2" height="1.6" rx=".8" fill="#c0201f"/><path d="M2.6 7h13.8l-.9 11a2.3 2.3 0 0 1-2.3 2H5.8a2.3 2.3 0 0 1-2.3-2z" fill="#c0201f"/><path d="M7 9.5l.5 6.8M12 9.5l-.5 6.8" stroke="#fde1df" stroke-width="1.1" stroke-linecap="round"/></svg>
<div class="t" style="left:1738.80px;top:803.03px;font-size:14.2px;color:#c0292a;font-weight:700;letter-spacing:-0.327px;">Delete</div>
<div class="r" style="left:348px;top:857px;width:1451px;height:2px;background:repeating-linear-gradient(90deg,#dadbdf 0 4.6px,transparent 4.6px 6.9px)"></div>
<div class="t m" style="right:275.57px;top:888.60px;font-size:18px;color:#6a7683;letter-spacing:0.109px;">Interim Total</div>
<div class="t" style="right:68.49px;top:888.09px;font-size:18.6px;color:#111;font-weight:700;letter-spacing:1.113px;">$0.00</div>
<div class="t m" style="right:275.62px;top:926.60px;font-size:18px;color:#6a7683;letter-spacing:0.069px;">Discount</div>
<div class="t m" style="right:68.82px;top:926.09px;font-size:18.6px;color:#e32424;letter-spacing:0.774px;">-$0.00</div>
<div class="t m" style="right:275.81px;top:964.50px;font-size:18px;color:#6a7683;letter-spacing:-0.127px;">Total IQD</div>
<div class="t m" style="right:68.99px;top:963.99px;font-size:18.6px;color:#111;letter-spacing:0.613px;">$0.00</div>
<div class="r" style="left:1383px;top:572px;width:482px;height:126.79999999999995px;background:#fff;border-radius:0 0 7px 7px;box-shadow:0 2px 5px rgba(0,0,0,0.12)"></div>
<div class="r" style="left:1395px;top:583px;width:458px;height:50px;background:#fff;border:1px solid #dfe2e7;border-radius:9px"></div>
<div class="t m" style="left:1412.00px;top:601.68px;font-size:15.2px;color:#7b7f86;letter-spacing:-0.376px;">Arama</div>
<div class="r" style="left:1392px;top:654px;width:463px;height:34px;background:#ebeffb;border-radius:3px"></div>
<svg class="r" style="left:1402px;top:664px;" width="15" height="15" viewBox="0 0 15 15"><rect x="0" y="0" width="15" height="15" rx="2.5" fill="#1a6ff0"/><path d="M3.3 7.6l2.8 2.8 5.6-5.6" fill="none" stroke="#fff" stroke-width="2" stroke-linecap="round" stroke-linejoin="round"/></svg>
<div class="t m" style="left:1424.80px;top:662.90px;font-size:18px;color:#1f2226;letter-spacing:-0.225px;">Test Revenue</div>
<div class="r" style="left:0px;top:995px;width:1920px;height:85px;background:#ebecee"></div>
<svg class="r" style="left:30px;top:1005px;" width="185" height="60" viewBox="30 1005 185 60"><g fill="none" stroke="#cc0000" stroke-width="4.4"><circle cx="52.85" cy="1035.8" r="10.8"/><path d="M63.9 1023.4V1047A10.9 10.9 0 0 1 46.3 1055.6"/><path d="M74.1 1023.4V1037.6A8.95 8.95 0 0 0 92 1037.6M92 1023.4V1048.8"/><path d="M103.35 1023.4V1048.8"/><circle cx="123.95" cy="1035.8" r="10.8"/><path d="M134.8 1015V1048.8"/><circle cx="155.15" cy="1035.8" r="10.8"/><path d="M166 1015V1048.8"/><path d="M174.75 1036H196A10.65 10.65 0 1 0 193.3 1043.2"/></g><rect x="101.1" y="1016" width="4.5" height="4.8" fill="#cc0000"/><rect x="200.1" y="1043.1" width="4.8" height="4.5" fill="#cc0000"/></svg>
<div class="t" style="left:1490.30px;top:1023.27px;font-size:34.5px;color:#5f6368;letter-spacing:0.270px;-webkit-text-stroke-width:0;">Made with guidde.com</div>
</body></html>
